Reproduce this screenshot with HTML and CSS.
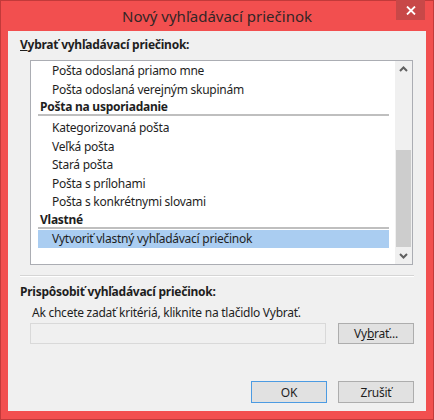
FILE: index.html
```html
<!DOCTYPE html>
<html lang="sk">
<head>
    <meta charset="UTF-8">
    <meta name="viewport" content="width=device-width, initial-scale=1.0">
    <title>Nový vyhľadávací priečinok</title>
    <link rel="stylesheet" href="styles.css">
</head>
<body>
    <div class="window">
        <div class="titlebar">
            <div class="title">Nový vyhľadávací priečinok</div>
            <button class="close-btn" aria-label="Zavrieť">
                <svg width="10" height="9" viewBox="0 0 10 9">
                    <path d="M1 0.5 L9 8.5 M9 0.5 L1 8.5" stroke="#ffffff" stroke-width="1.8" fill="none"/>
                </svg>
            </button>
        </div>

        <div class="client">
            <div class="group-label"><u>V</u>ybrať vyhľadávací priečinok:</div>

            <div class="listbox">
                <ul class="list">
                    <li class="item">Pošta odoslaná priamo mne</li>
                    <li class="item">Pošta odoslaná verejným skupinám</li>
                    <li class="group">Pošta na usporiadanie</li>
                    <li class="item">Kategorizovaná pošta</li>
                    <li class="item">Veľká pošta</li>
                    <li class="item">Stará pošta</li>
                    <li class="item">Pošta s prílohami</li>
                    <li class="item">Pošta s konkrétnymi slovami</li>
                    <li class="group group-last">Vlastné</li>
                    <li class="item selected">Vytvoriť vlastný vyhľadávací priečinok</li>
                </ul>
                <div class="scrollbar">
                    <div class="scroll-arrow">
                        <svg width="17" height="17" viewBox="0 0 17 17">
                            <polyline points="5,10 8.5,6.5 12,10" stroke="#606060" stroke-width="2" fill="none"/>
                        </svg>
                    </div>
                    <div class="scroll-track">
                        <div class="scroll-thumb"></div>
                    </div>
                    <div class="scroll-arrow">
                        <svg width="17" height="17" viewBox="0 0 17 17">
                            <polyline points="5,7 8.5,10.5 12,7" stroke="#606060" stroke-width="2" fill="none"/>
                        </svg>
                    </div>
                </div>
            </div>

            <div class="divider"></div>

            <div class="group-label section-gap">Prispôsobiť vyhľadávací priečinok:</div>
            <div class="hint">Ak chcete zadať kritériá, kliknite na tlačidlo Vybrať.</div>

            <div class="criteria-row">
                <div class="criteria-box"></div>
                <button class="btn">Vy<u>b</u>rať...</button>
            </div>

            <div class="footer">
                <button class="btn btn-default">OK</button>
                <button class="btn">Zrušiť</button>
            </div>
        </div>
    </div>
</body>
</html>
```

FILE: styles.css
```css
body {
    margin: 0;
    font-family: "Noto Sans", "Open Sans", sans-serif;
    font-size: 12px;
    letter-spacing: -0.25px;
    color: #1e1e1e;
}
.window {
    width: 434px;
    height: 420px;
    box-sizing: border-box;
    background-color: #f24f4f;
    border: 1px solid #c23a3a;
    display: flex;
    flex-direction: column;
}
.titlebar {
    height: 30px;
    display: flex;
    align-items: flex-start;
    padding-left: 37px;
}
.title {
    flex: 1;
    text-align: center;
    font-size: 15px;
    letter-spacing: 0;
    line-height: 30px;
    color: #332626;
}
.close-btn {
    width: 29px;
    height: 20px;
    margin-right: 8px;
    margin-top: -1px;
    padding: 0;
    border: none;
    background-color: #c84848;
    display: flex;
    justify-content: center;
    align-items: center;
}
.client {
    flex: 1;
    margin: 0 7px 8px 7px;
    background-color: #f0f0f0;
    padding: 6px 12px 8px 12px;
    display: flex;
    flex-direction: column;
}
.group-label {
    font-weight: bold;
    line-height: 16px;
}
.section-gap {
    margin-top: 7px;
}
.listbox {
    margin: 7px 0 0 10px;
    width: 383px;
    height: 205px;
    box-sizing: border-box;
    border: 1px solid #abadb3;
    background-color: #ffffff;
    display: flex;
}
.list {
    flex: 1;
    list-style: none;
    margin: 0;
    padding: 1px 6px 0 7px;
    overflow: hidden;
}
.item {
    height: 18.5px;
    line-height: 18.5px;
    padding-left: 14px;
    white-space: nowrap;
}
.group {
    font-weight: bold;
    line-height: 15px;
    padding-left: 2px;
    border-bottom: 2px solid #bfbfbf;
    margin-bottom: 3px;
}
.group-last {
    margin-bottom: 1px;
}
.selected {
    background-color: #aacdf1;
}
.scrollbar {
    width: 17px;
    background-color: #f0f0f0;
    display: flex;
    flex-direction: column;
}
.scroll-arrow {
    height: 17px;
}
.scroll-arrow svg {
    display: block;
}
.scroll-track {
    flex: 1;
}
.scroll-thumb {
    margin: 72px 1px 0 1px;
    height: 97px;
    background-color: #cdcdcd;
}
.divider {
    margin-top: 10px;
    height: 1px;
    background-color: #d5d5d5;
    border-bottom: 1px solid #ffffff;
}
.hint {
    margin: 5px 0 0 12px;
    line-height: 16px;
}
.criteria-row {
    margin: 2px 0 0 10px;
    display: flex;
    gap: 12px;
}
.criteria-box {
    width: 296px;
    height: 21px;
    box-sizing: border-box;
    border: 1px solid #d9d9d9;
    background-color: #f0f0f0;
}
.btn {
    width: 76px;
    height: 21px;
    box-sizing: border-box;
    padding: 0;
    border: 1px solid #adadad;
    background-color: #e1e1e1;
    font-family: inherit;
    font-size: 12px;
    letter-spacing: inherit;
    color: #1e1e1e;
}
.btn-default {
    border-color: #4c9be2;
}
.footer {
    margin-top: auto;
    display: flex;
    justify-content: flex-end;
    gap: 11px;
}
.footer .btn {
    height: 22px;
}
```
